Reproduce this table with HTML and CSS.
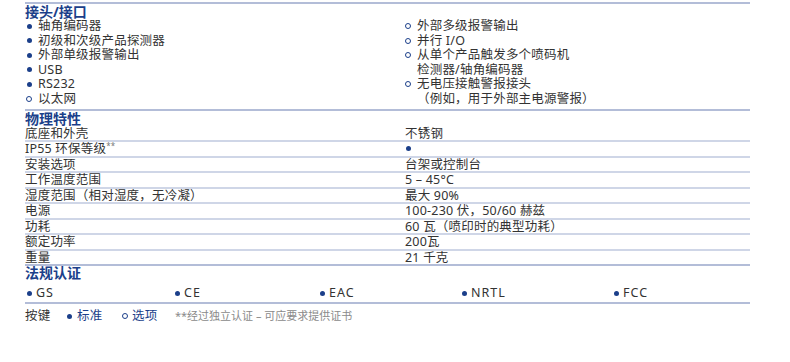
FILE: index.html
```html
<!DOCTYPE html>
<html lang="zh-CN">
<head>
<meta charset="utf-8">
<title>规格</title>
<link rel="stylesheet" href="styles.css">
</head>
<body>
<div class="spec">
  <section class="sec sec-conn">
    <h2 class="head">接头/接口</h2>
    <div class="cols">
      <ul class="list">
        <li class="item"><span class="mk"><span class="dot"></span></span><span>轴角编码器</span></li>
        <li class="item"><span class="mk"><span class="dot"></span></span><span>初级和次级产品探测器</span></li>
        <li class="item"><span class="mk"><span class="dot"></span></span><span>外部单级报警输出</span></li>
        <li class="item"><span class="mk"><span class="dot"></span></span><span>USB</span></li>
        <li class="item"><span class="mk"><span class="dot"></span></span><span>RS232</span></li>
        <li class="item"><span class="mk"><span class="ring"></span></span><span>以太网</span></li>
      </ul>
      <ul class="list">
        <li class="item"><span class="mk"><span class="ring"></span></span><span>外部多级报警输出</span></li>
        <li class="item"><span class="mk"><span class="ring"></span></span><span>并行 I/O</span></li>
        <li class="item"><span class="mk"><span class="ring"></span></span><span>从单个产品触发多个喷码机<br>检测器/轴角编码器</span></li>
        <li class="item"><span class="mk"><span class="ring"></span></span><span>无电压接触警报接头<br>（例如，用于外部主电源警报）</span></li>
      </ul>
    </div>
  </section>

  <section class="sec sec-phys">
    <h2 class="head">物理特性</h2>
    <div class="row"><span>底座和外壳</span><span>不锈钢</span></div>
    <div class="row"><span>IP55 环保等级<sup class="ast">**</sup></span><span><span class="dot dot-val"></span></span></div>
    <div class="row"><span>安装选项</span><span>台架或控制台</span></div>
    <div class="row"><span>工作温度范围</span><span>5 – 45°C</span></div>
    <div class="row"><span>湿度范围（相对湿度，无冷凝）</span><span>最大 90%</span></div>
    <div class="row"><span>电源</span><span>100-230 伏，50/60 赫兹</span></div>
    <div class="row"><span>功耗</span><span>60 瓦（喷印时的典型功耗）</span></div>
    <div class="row"><span>额定功率</span><span>200瓦</span></div>
    <div class="row row-last"><span>重量</span><span>21 千克</span></div>
  </section>

  <section class="sec sec-cert">
    <h2 class="head">法规认证</h2>
    <div class="certs">
      <span class="cert c1"><span class="mk"><span class="dot"></span></span>GS</span>
      <span class="cert c2"><span class="mk"><span class="dot"></span></span>CE</span>
      <span class="cert c3"><span class="mk"><span class="dot"></span></span>EAC</span>
      <span class="cert c4"><span class="mk"><span class="dot"></span></span>NRTL</span>
      <span class="cert c5"><span class="mk"><span class="dot"></span></span>FCC</span>
    </div>
  </section>

  <div class="key">
    <span class="key-label">按键</span>
    <span class="key-item key-std"><span class="mk"><span class="dot"></span></span>标准</span>
    <span class="key-item key-opt"><span class="mk"><span class="ring"></span></span>选项</span>
    <span class="key-note">**经过独立认证 – 可应要求提供证书</span>
  </div>
</div>
</body>
</html>
```

FILE: styles.css
```css
* { box-sizing: border-box; }

html, body {
  margin: 0;
  padding: 0;
  background: #ffffff;
}

body {
  font-family: "Noto Sans", "Noto Sans CJK SC", sans-serif;
  font-size: 12.5px;
  color: #333333;
  letter-spacing: 0.2px;
}

.spec {
  width: 725px;
  margin: 2px 0 0 25px;
}

.sec {
  border-top: 2px solid #b3bdd8;
}

.head {
  margin: 0;
  font-size: 14px;
  font-weight: 700;
  line-height: 15px;
  color: #1b3f8a;
  letter-spacing: 0;
}

.sec-conn { padding-bottom: 2px; }

.cols {
  display: grid;
  grid-template-columns: 379px 1fr;
}

.list {
  list-style: none;
  margin: 0;
  padding: 0;
}

.item {
  display: flex;
  line-height: 14.6px;
}

.mk {
  display: inline-flex;
  align-items: center;
  width: 13px;
  height: 14px;
  flex: none;
  vertical-align: middle;
}

.dot {
  display: inline-block;
  width: 5px;
  height: 5px;
  border-radius: 50%;
  background: #1b3f8a;
  margin-left: 2px;
}

.ring {
  display: inline-block;
  width: 6px;
  height: 6px;
  border-radius: 50%;
  border: 1.3px solid #1b3f8a;
  margin-left: 1px;
}

.sec-phys .head { line-height: 16px; }

.row {
  display: grid;
  grid-template-columns: 380px 1fr;
  line-height: 13.5px;
  border-bottom: 2px solid #cfd6e7;
}

.row-last { border-bottom: none; }

.dot-val { margin-left: 1px; vertical-align: middle; position: relative; top: -1px; }

.ast {
  font-size: 8px;
  color: #777777;
  vertical-align: 4px;
  line-height: 0;
}

.sec-cert .head { line-height: 14px; }

.sec-cert {
  border-bottom: 2px solid #b3bdd8;
}

.certs {
  display: flex;
  padding: 6px 0 2px;
  line-height: 14px;
  letter-spacing: 1px;
}

.cert {
  display: inline-flex;
  align-items: center;
}

.cert .mk { width: 11px; }

.c1 { width: 148px; }
.c2 { width: 145px; }
.c3 { width: 142px; }
.c4 { width: 152px; }

.key {
  display: flex;
  align-items: center;
  padding-top: 4px;
  line-height: 16px;
}

.key-label { width: 42px; }

.key-item {
  display: inline-flex;
  align-items: center;
  color: #1b3f8a;
}

.key-std { width: 55px; }
.key-opt { width: 53px; }

.key-item .mk { width: 10px; }
.key-item .dot { margin-left: 0; }
.key-item .ring { margin-left: 0; }

.key-note {
  font-size: 11px;
  color: #8a8a8a;
  letter-spacing: 0;
}
```
